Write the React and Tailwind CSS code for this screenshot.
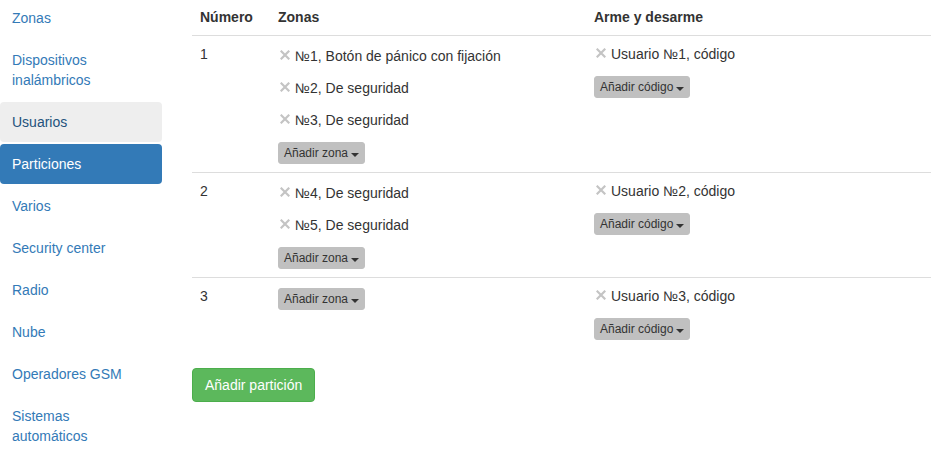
const navItems = [
  { label: "Zonas" },
  { label: "Dispositivos inalámbricos" },
  { label: "Usuarios", hover: true },
  { label: "Particiones", active: true },
  { label: "Varios" },
  { label: "Security center" },
  { label: "Radio" },
  { label: "Nube" },
  { label: "Operadores GSM" },
  { label: "Sistemas", label2: "automáticos" },
];

const partitions = [
  {
    n: 1,
    zones: ["№1, Botón de pánico con fijación", "№2, De seguridad", "№3, De seguridad"],
    users: ["Usuario №1, código"],
  },
  { n: 2, zones: ["№4, De seguridad", "№5, De seguridad"], users: ["Usuario №2, código"] },
  { n: 3, zones: [], users: ["Usuario №3, código"] },
];

function RemoveIcon() {
  return (
    <svg width="10" height="10" viewBox="0 0 10 10" className="ml-[2px] mr-[5px] shrink-0 -mt-[2px]">
      <path d="M1.5 1.5 L8.5 8.5 M8.5 1.5 L1.5 8.5" stroke="#c4c4c4" strokeWidth="2.2" strokeLinecap="square" />
    </svg>
  );
}

function Item({ text }) {
  return (
    <div className="flex items-center h-5 leading-5 text-[#333]">
      <RemoveIcon />
      <span>{text}</span>
    </div>
  );
}

function DropButton({ label }) {
  return (
    <button className="inline-flex items-center bg-[#c0c0c0] border border-[#c0c0c0] rounded-[3px] px-[5px] py-[1px] text-[12px] leading-[18px] text-[#333]">
      {label}
      <span className="inline-block w-0 h-0 ml-[3px] mt-[3px] border-t-[4px] border-t-[#333] border-x-[4px] border-x-transparent" />
    </button>
  );
}

export default function App() {
  return (
    <div className="flex w-[931px] h-[458px] overflow-hidden bg-white font-['Liberation_Sans',Arial,sans-serif] text-[14px]">
      {/* sidebar nav pills */}
      <ul className="w-[162px] shrink-0 -mt-[2px] flex flex-col gap-[2px]">
        {navItems.map((it) => (
          <li
            key={it.label}
            className={`px-3 py-[10px] leading-5 rounded ${
              it.active ? "bg-[#337ab7] text-white" : it.hover ? "bg-[#eee] text-[#23527c]" : "text-[#337ab7]"
            }`}
          >
            {it.label}
            {it.label2 && (
              <>
                <br />
                {it.label2}
              </>
            )}
          </li>
        ))}
      </ul>

      {/* main */}
      <div className="ml-[30px] flex-1">
        <table className="w-full border-collapse mb-5 -mt-[1px]">
          <thead>
            <tr className="text-left text-[#333]">
              <th className="w-[78px] px-2 py-2 leading-5 font-bold border-b border-[#ddd]">Número</th>
              <th className="w-[316px] px-2 py-2 leading-5 font-bold border-b border-[#ddd]">Zonas</th>
              <th className="px-2 py-2 leading-5 font-bold border-b border-[#ddd]">Arme y desarme</th>
            </tr>
          </thead>
          <tbody>
            {partitions.map((p, i) => (
              <tr key={p.n} className={i > 0 ? "border-t border-[#ddd]" : ""}>
                <td className="align-top px-2 py-2 leading-5 text-[#333]">{p.n}</td>
                <td className="align-top px-2 py-2">
                  <div className="pt-[2px] flex flex-col gap-3 items-start">
                    {p.zones.map((z) => (
                      <Item key={z} text={z} />
                    ))}
                    <DropButton label="Añadir zona" />
                  </div>
                </td>
                <td className="align-top px-2 py-2">
                  <div className="flex flex-col gap-3 items-start">
                    {p.users.map((u) => (
                      <Item key={u} text={u} />
                    ))}
                    <DropButton label="Añadir código" />
                  </div>
                </td>
              </tr>
            ))}
          </tbody>
        </table>
        <button className="bg-[#5cb85c] border border-[#4cae4c] rounded px-3 py-[6px] leading-5 text-white">
          Añadir partición
        </button>
      </div>
    </div>
  );
}
